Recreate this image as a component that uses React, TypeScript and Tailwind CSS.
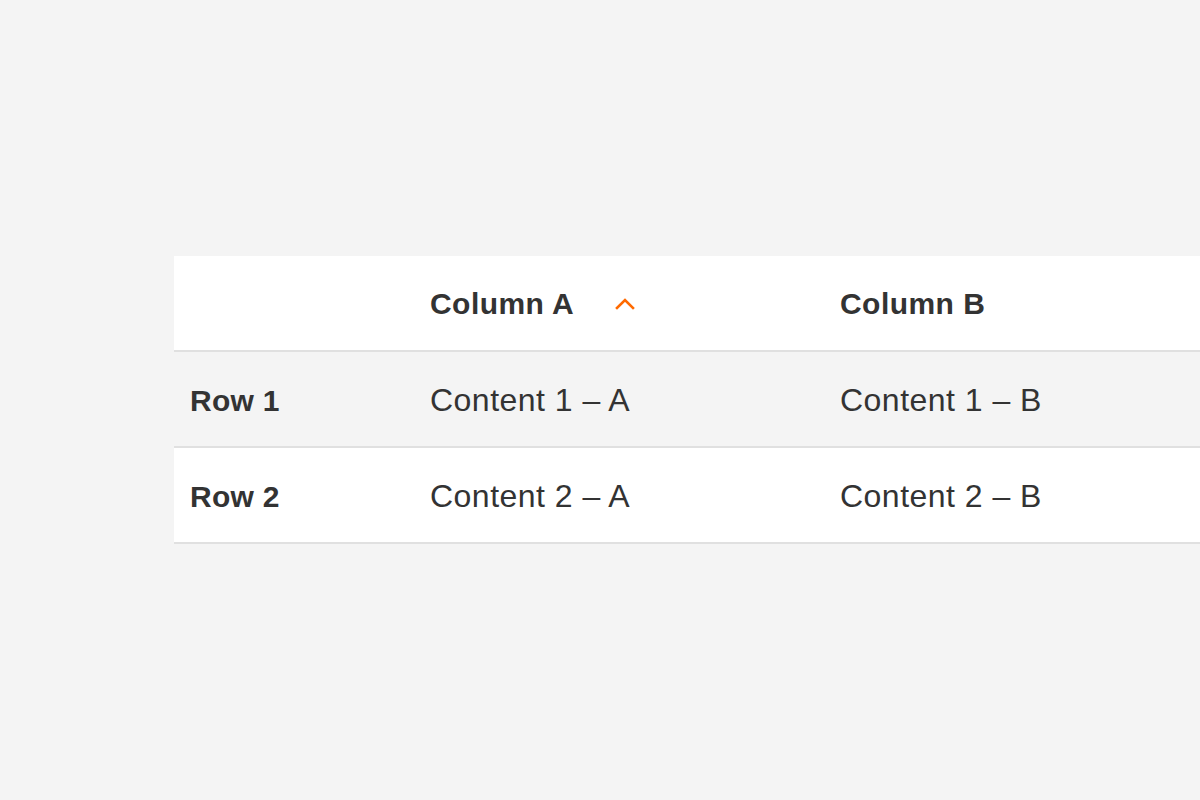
const rows = [
  { label: "Row 1", a: "Content 1 – A", b: "Content 1 – B", bg: "bg-[#f4f4f4]" },
  { label: "Row 2", a: "Content 2 – A", b: "Content 2 – B", bg: "bg-white" },
];

function ChevronUp() {
  return (
    <svg width="20" height="12" viewBox="0 0 20 12" fill="none" className="ml-[41px] mt-[2px]">
      <path d="M2 10 L10 2 L18 10" stroke="#ff6a00" strokeWidth="2.6" strokeLinecap="square" />
    </svg>
  );
}

export default function App() {
  return (
    <div
      className="h-screen w-full overflow-hidden bg-[#f4f4f4] pt-[256px] pl-[174px] text-[#333333]"
      style={{ fontFamily: '"Liberation Sans", Arial, sans-serif' }}
    >
      <div className="w-full">
        {/* Header */}
        <div className="grid h-[96px] grid-cols-[240px_410px_1fr] items-center border-b-2 border-[#e0e0e0] bg-white">
          <div className="px-4" />
          <div className="flex items-center px-4 text-[30px] font-bold tracking-[0.015em]">
            Column A
            <ChevronUp />
          </div>
          <div className="px-4 text-[30px] font-bold tracking-[0.015em]">Column B</div>
        </div>

        {/* Body */}
        {rows.map((r) => (
          <div
            key={r.label}
            className={`grid h-[96px] grid-cols-[240px_410px_1fr] items-center border-b-2 border-[#e0e0e0] ${r.bg}`}
          >
            <div className="px-4 pt-[2px] text-[30px] font-bold tracking-[0.01em]">{r.label}</div>
            <div className="px-4 pt-[2px] text-[32px] tracking-[0.015em]">{r.a}</div>
            <div className="px-4 pt-[2px] text-[32px] tracking-[0.015em]">{r.b}</div>
          </div>
        ))}
      </div>
    </div>
  );
}
